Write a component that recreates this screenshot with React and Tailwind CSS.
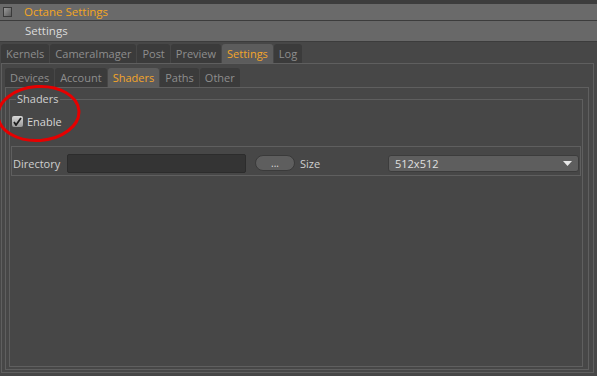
const mainTabs = ["Kernels", "CameraImager", "Post", "Preview", "Settings", "Log"];
const subTabs = ["Devices", "Account", "Shaders", "Paths", "Other"];

function Tab({ label, active }) {
  return (
    <div
      className={`h-[19px] px-[5px] flex items-center rounded-t-[3px] mr-px ${
        active ? "bg-[#5c5c5c] text-[#f3a52a]" : "bg-[#3b3b3b] text-[#8e8e8e]"
      }`}
    >
      {label}
    </div>
  );
}

export default function App() {
  return (
    <div
      className="relative w-[597px] h-[376px] overflow-hidden bg-[#474747] text-[11px] leading-none flex flex-col"
      style={{ fontFamily: '"Open Sans", "DejaVu Sans", sans-serif' }}
    >
      <div className="h-[4px] bg-[#3d3d3d]" />
      <div className="h-[17px] bg-[#6a6a6a] border-b border-[#3c3c3c] flex items-center">
        <div className="ml-[3px] w-[9px] h-[10px] border border-[#3a3a3a] bg-gradient-to-br from-[#9a9a9a] to-[#5a5a5a]" />
        <span className="ml-[12px] text-[11.5px] text-[#f4a623]">Octane Settings</span>
      </div>
      <div className="h-[21px] bg-[#686868] border-b border-[#3c3c3c] flex items-center">
        <div
          className="ml-[4px] w-[9px] h-[10px]"
          style={{ backgroundImage: "radial-gradient(#2e2e2e 40%, transparent 45%)", backgroundSize: "2px 2px" }}
        />
        <span className="ml-[12px] text-[11.5px] text-[#dcdcdc]">Settings</span>
      </div>

      <div className="flex pt-[2px] pl-[1px]">
        {mainTabs.map((t) => (
          <Tab key={t} label={t} active={t === "Settings"} />
        ))}
      </div>

      <div className="flex-1 ml-[1px] mr-[3px] mb-[3px] border border-[#5f5f5f] flex flex-col">
        <div className="flex pt-[4px] pl-[3px]">
          {subTabs.map((t) => (
            <Tab key={t} label={t} active={t === "Shaders"} />
          ))}
        </div>
        <div className="flex-1 ml-[3px] mr-[4px] mb-[2px] border border-[#5f5f5f] flex flex-col">
          <div className="relative flex-1 mt-[11px] ml-[3px] mr-[5px] mb-[2px] border border-[#5f5f5f] flex flex-col">
            <span className="absolute -top-[7px] left-[6px] px-[1px] bg-[#474747] text-[#cfcfcf]">Shaders</span>
            <div className="flex items-center mt-[16px] ml-[2px]">
              <div className="w-[11px] h-[11px] rounded-[2px] bg-gradient-to-b from-[#d8d8d8] to-[#9a9a9a] flex items-center justify-center">
                <svg width="9" height="9" viewBox="0 0 9 9">
                  <path d="M1 5 L3 8 L8 1" stroke="#1e1e1e" strokeWidth="1.8" fill="none" />
                </svg>
              </div>
              <span className="ml-[4px] text-[#d6d6d6]">Enable</span>
            </div>
            <div className="mt-[19px] ml-[1px] mr-[1px] h-[30px] pt-[4px] border border-[#5f5f5f] flex items-center">
              <span className="ml-[1px] w-[50px] text-[#cfcfcf]">Directory</span>
              <div className="ml-[4px] w-[179px] h-[19px] bg-[#343434] rounded-[2px] border border-[#2c2c2c]" />
              <div className="ml-[9px] w-[40px] h-[16px] rounded-full bg-[#5e5e5e] border border-[#3a3a3a] text-[#dcdcdc] flex items-center justify-center text-[10px]">
                ...
              </div>
              <span className="ml-[5px] w-[88px] text-[#cfcfcf]">Size</span>
              <div className="w-[191px] h-[17px] rounded-[3px] bg-[#5e5e5e] border border-[#3c3c3c] flex items-center justify-between px-[6px] text-[#e0e0e0]">
                <span>512x512</span>
                <svg width="9" height="5" viewBox="0 0 9 5">
                  <path d="M0 0 H9 L4.5 5 Z" fill="#e8e8e8" />
                </svg>
              </div>
            </div>
          </div>
        </div>
      </div>

      <svg className="absolute left-0 top-0 pointer-events-none" width="597" height="376">
        <ellipse cx="38.5" cy="113.5" rx="40.5" ry="27" fill="none" stroke="#e60000" strokeWidth="3" transform="rotate(-4 38.5 113.5)" />
      </svg>
    </div>
  );
}
